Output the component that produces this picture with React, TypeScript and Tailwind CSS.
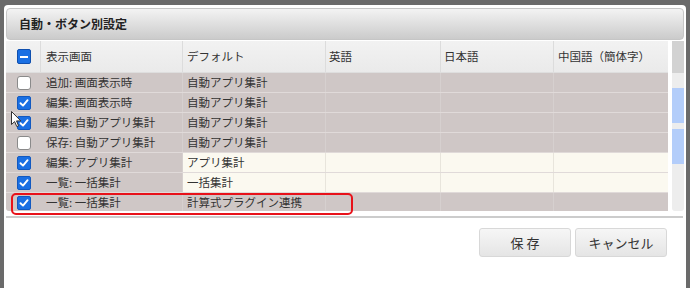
import React from "react";

const font = { fontFamily: '"Noto Sans CJK JP", "Noto Sans", sans-serif' };

type Row = { checked: boolean; screen: string; def: string; cream: boolean };

const rows: Row[] = [
  { checked: false, screen: "追加: 画面表示時", def: "自動アプリ集計", cream: false },
  { checked: true, screen: "編集: 画面表示時", def: "自動アプリ集計", cream: false },
  { checked: true, screen: "編集: 自動アプリ集計", def: "自動アプリ集計", cream: false },
  { checked: false, screen: "保存: 自動アプリ集計", def: "自動アプリ集計", cream: false },
  { checked: true, screen: "編集: アプリ集計", def: "アプリ集計", cream: true },
  { checked: true, screen: "一覧: 一括集計", def: "一括集計", cream: true },
  { checked: true, screen: "一覧: 一括集計", def: "計算式プラグイン連携", cream: false },
];

function CheckBox({ checked }: { checked: boolean }) {
  if (!checked) {
    return (
      <div className="w-[14px] h-[14px] rounded-[3px] border border-[#8a8a8a] bg-white" />
    );
  }
  return (
    <div className="w-[14px] h-[14px] rounded-[2px] bg-[#1a6fe3] border border-[#1259c0] flex items-center justify-center">
      <svg width="10" height="10" viewBox="0 0 10 10">
        <path d="M1.5 5.2 L4 7.6 L8.6 2.2" fill="none" stroke="white" strokeWidth="1.9" strokeLinecap="round" strokeLinejoin="round" />
      </svg>
    </div>
  );
}

export default function App() {
  return (
    <div className="relative w-[690px] h-[288px] overflow-hidden bg-[#6a6a6a] pt-[5px] px-[4px]" style={font}>
      <div className="h-full bg-white rounded-t-[4px] pt-[3px] px-[2px] flex flex-col">
        {/* title */}
        <div className="h-[32px] rounded-[4px] border border-[#c6c6c6] bg-gradient-to-b from-[#f3f3f3] to-[#cbcbcb] flex items-center pl-[12px] text-[12px] font-bold text-[#222]">
          自動・ボタン別設定
        </div>
        {/* table area */}
        <div className="mt-[1px] flex">
          <div className="w-[662px] flex flex-col">
            {/* header */}
            <div className="h-[32px] flex bg-gradient-to-b from-[#f2f2f2] to-[#eaeaea] text-[11.5px] text-[#333] border-b border-[#dedede]">
              <div className="w-[35px] flex items-center justify-center border-r border-[#dcdcdc] pl-[1px]">
                <div className="w-[14px] h-[15px] rounded-[2px] bg-[#1a6fe3] border border-[#0f4fae] flex items-center justify-center">
                  <div className="w-[8px] h-[2px] bg-white" />
                </div>
              </div>
              <div className="w-[142px] flex items-center pl-[5px] border-r border-[#dcdcdc]">表示画面</div>
              <div className="w-[143px] flex items-center pl-[4px] border-r border-[#dcdcdc]">デフォルト</div>
              <div className="w-[115px] flex items-center pl-[3px] border-r border-[#dcdcdc]">英語</div>
              <div className="w-[113px] flex items-center pl-[3px] border-r border-[#dcdcdc]">日本語</div>
              <div className="w-[114px] flex items-center pl-[4px]">中国語（簡体字）</div>
            </div>
            {/* body */}
            <div className="h-[138px] overflow-hidden rounded-bl-[3px]">
              {rows.map((r, i) => (
                <div key={i} className="h-[20px] flex text-[11.5px] text-[#333] bg-[#cfc7c6] border-b border-[#e0dad9]">
                  <div className="w-[35px] flex items-center justify-center pl-[1px]">
                    <CheckBox checked={r.checked} />
                  </div>
                  <div className="w-[142px] flex items-center pl-[5px] border-r border-[#d6d0cf]">{r.screen}</div>
                  <div className={`w-[143px] flex items-center pl-[4px] border-r ${r.cream ? "bg-[#fbf9f0] border-[#e8e5dc]" : "border-[#d6d0cf]"}`}>{r.def}</div>
                  <div className={`w-[115px] border-r ${r.cream ? "bg-[#fbf9f0] border-[#e8e5dc]" : "border-[#d6d0cf]"}`} />
                  <div className={`w-[113px] border-r ${r.cream ? "bg-[#fbf9f0] border-[#e8e5dc]" : "border-[#d6d0cf]"}`} />
                  <div className={`w-[114px] ${r.cream ? "bg-[#fbf9f0]" : ""}`} />
                </div>
              ))}
            </div>
          </div>
          {/* scrollbar */}
          <div className="ml-[4px] w-[12px] flex flex-col">
            <div className="h-[32px] bg-[#d2d2d2]" />
            <div className="h-[138px] bg-[#ededed] rounded-b-[3px] flex flex-col pt-[15px]">
              <div className="h-[35px] bg-[#b3cdfa]" />
              <div className="h-[6px]" />
              <div className="h-[35px] bg-[#b3cdfa]" />
            </div>
          </div>
        </div>
        {/* separator */}
        <div className="mt-[5px] h-[2px] bg-[#cccccc] mr-[1px]" />
        {/* buttons */}
        <div className="mt-[10px] flex justify-end gap-[4px] pr-[17px]">
          <button className="w-[92px] h-[29px] rounded-[3px] border border-[#d8d8d8] bg-gradient-to-b from-[#f6f6f6] to-[#e5e5e5] text-[13px] text-[#333]">
            保 存
          </button>
          <button className="w-[92px] h-[29px] rounded-[3px] border border-[#d8d8d8] bg-gradient-to-b from-[#f6f6f6] to-[#e5e5e5] text-[13px] text-[#333]">
            キャンセル
          </button>
        </div>
      </div>
      {/* red highlight */}
      <div className="absolute left-[11px] top-[193px] w-[342px] h-[22px] border-2 border-[#e8121a] rounded-[5px]" />
      {/* mouse cursor */}
      <svg className="absolute left-[11px] top-[111px]" width="11" height="17" viewBox="0 0 11 17">
        <path d="M0.5 0.5 L0.5 13.5 L3.6 10.6 L5.8 15.6 L7.6 14.8 L5.5 9.9 L9.8 9.9 Z" fill="white" stroke="#333" strokeWidth="1" strokeLinejoin="round" />
      </svg>
    </div>
  );
}
